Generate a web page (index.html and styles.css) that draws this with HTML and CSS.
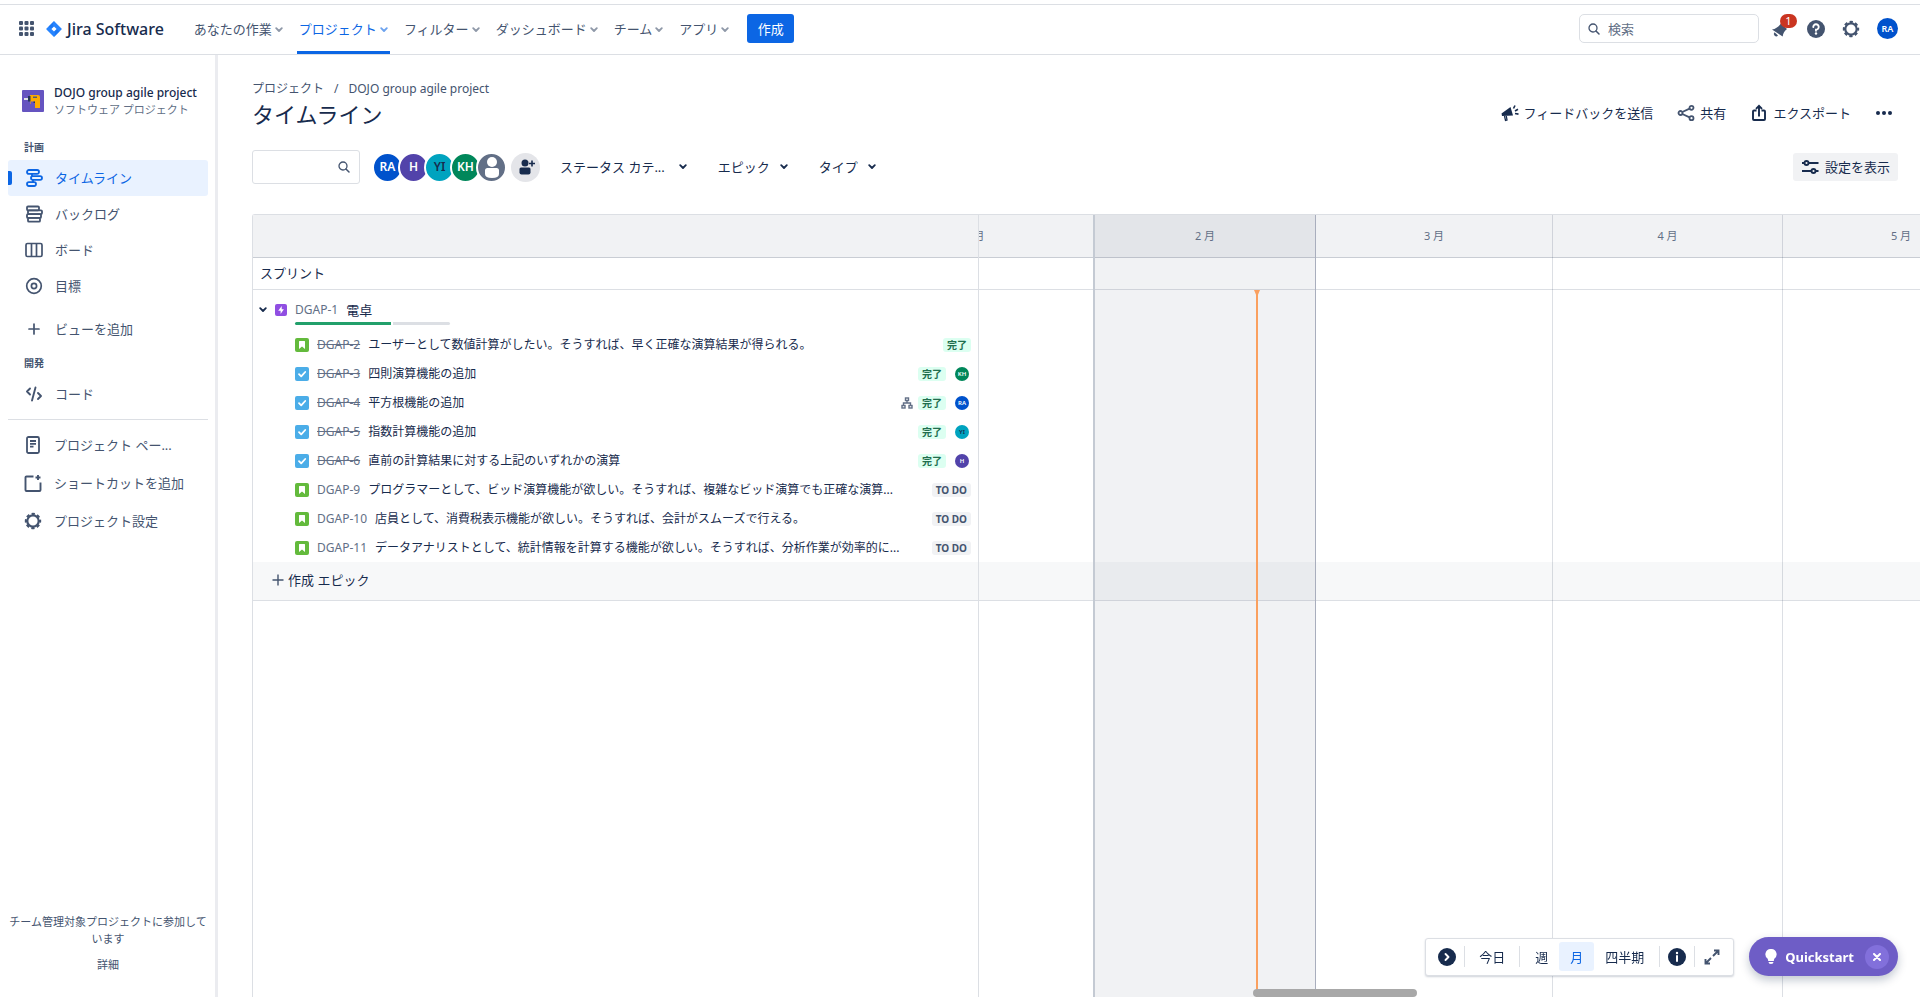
FILE: index.html
```html
<!DOCTYPE html>
<html lang="ja">
<head>
<meta charset="utf-8">
<meta name="viewport" content="width=device-width, initial-scale=1">
<title>タイムライン - Jira Software</title>
<link rel="stylesheet" href="styles.css">
</head>
<body>
<svg class="defs" aria-hidden="true">
  <symbol id="chev" viewBox="0 0 8 6"><path d="M1.2 1.2 4 4 6.800 1.200" fill="none" stroke="currentColor" stroke-width="1.800" stroke-linecap="round" stroke-linejoin="round"/></symbol>
  <symbol id="gear" viewBox="0 0 18 18"><circle cx="9" cy="9" r="5.700" fill="none" stroke="currentColor" stroke-width="2.200"/><circle cx="9" cy="9" r="7.100" fill="none" stroke="currentColor" stroke-width="2.200" stroke-dasharray="3.200 2.376" stroke-dashoffset="1.600"/></symbol>
  <symbol id="search" viewBox="0 0 12 12"><circle cx="5" cy="5" r="4" fill="none" stroke="currentColor" stroke-width="1.300"/><path d="m8 8 3 3" stroke="currentColor" stroke-width="1.500" stroke-linecap="round"/></symbol>
  <symbol id="story" viewBox="0 0 14 14"><rect width="14" height="14" rx="2" fill="#63ba3c"/><path d="M4 3.500q0-.5.5-.5h5q.5 0 .5.500V11L7 8.600 4 11z" fill="#fff"/><path d="M5.700 4.700h2.600v3.200L7 6.900 5.700 7.900z" fill="#fff"/></symbol>
  <symbol id="task" viewBox="0 0 14 14"><rect width="14" height="14" rx="2" fill="#4bade8"/><path d="m4 7.200 2.200 2.200L10.200 5" fill="none" stroke="#fff" stroke-width="1.800" stroke-linecap="round" stroke-linejoin="round"/></symbol>
</svg>

<header class="topbar">
  <button class="plain switcher" aria-label="アプリスイッチャー"><svg width="15" height="15" viewBox="0 0 15 15" fill="currentColor"><rect width="4" height="4" rx="1"/><rect x="5.500" width="4" height="4" rx="1"/><rect x="11" width="4" height="4" rx="1"/><rect y="5.500" width="4" height="4" rx="1"/><rect x="5.500" y="5.500" width="4" height="4" rx="1"/><rect x="11" y="5.500" width="4" height="4" rx="1"/><rect y="11" width="4" height="4" rx="1"/><rect x="5.500" y="11" width="4" height="4" rx="1"/><rect x="11" y="11" width="4" height="4" rx="1"/></svg></button>
  <a class="brand" href="#"><svg width="16" height="16" viewBox="0 0 16 16"><path d="M8 0 15.500 7.500a.7.700 0 0 1 0 1L8 16 .5 8.500a.7.700 0 0 1 0-1z" fill="#2684ff"/><path d="M8 0C6.500 2 6.500 4 8 5.500L5.500 8 2.500 5.500z" fill="#0c66e4" opacity=".4"/><path d="M8 16c1.500-2 1.500-4 0-5.500L10.500 8l3 2.500z" fill="#0c66e4" opacity=".4"/><path d="M8 5.400 10.600 8 8 10.600 5.400 8z" fill="#fff"/></svg><span>Jira Software</span></a>
  <nav class="mainnav">
    <button class="plain">あなたの作業<svg class="chev"><use href="#chev"/></svg></button>
    <button class="plain current">プロジェクト<svg class="chev"><use href="#chev"/></svg></button>
    <button class="plain">フィルター<svg class="chev"><use href="#chev"/></svg></button>
    <button class="plain">ダッシュボード<svg class="chev"><use href="#chev"/></svg></button>
    <button class="plain">チーム<svg class="chev"><use href="#chev"/></svg></button>
    <button class="plain">アプリ<svg class="chev"><use href="#chev"/></svg></button>
  </nav>
  <button class="create">作成</button>
  <div class="topright">
    <label class="search"><svg width="12" height="12"><use href="#search"/></svg><input type="search" placeholder="検索" aria-label="検索"></label>
    <button class="plain bell" aria-label="通知"><svg width="18" height="18" viewBox="0 0 18 18" fill="currentColor"><path d="M0 9.500C4 8.800 6.500 6.500 9 3.500L15 9c-2.500 2-4 4.200-4.300 7.500z"/><path d="M2.500 12.300 6 15.500a2.200 2.200 0 0 1-3.500-3.200z"/></svg><span class="count">1</span></button>
    <button class="plain" aria-label="ヘルプ"><svg width="18" height="18" viewBox="0 0 18 18"><circle cx="9" cy="9" r="9" fill="currentColor"/><path d="M6.300 7A2.700 2.700 0 1 1 9 9.600v1.200" fill="none" stroke="#fff" stroke-width="1.900" stroke-linecap="round"/><circle cx="9" cy="13.500" r="1.200" fill="#fff"/></svg></button>
    <button class="plain" aria-label="設定"><svg width="18" height="18"><use href="#gear"/></svg></button>
    <button class="plain avatar me c-ra" aria-label="プロフィール">RA</button>
  </div>
</header>

<div class="shell">
  <aside class="sidebar">
    <div class="project">
      <svg width="22" height="22" viewBox="0 0 22 22"><rect width="22" height="22" rx="1" fill="#6554c0"/><path d="M8 5h8q2 0 2 2v11h-5v-4H8z" fill="#ffab00"/><path d="M6 6h2.500v5.500H6z" fill="#253858"/><path d="M2 8h4v2H2z" fill="#dfe1e6"/><path d="M11 6.500h4v1.500h-4z" fill="#505f79"/><path d="M8.500 11.500H13V14H8.500z" fill="#6554c0"/><path d="M11.500 11.500H13V13h-1.500z" fill="#253858"/></svg>
      <div><strong>DOJO group agile project</strong><small>ソフトウェア プロジェクト</small></div>
    </div>
    <h2>計画</h2>
    <ul class="plan">
      <li><a class="active" href="#"><svg class="nicon" viewBox="0 0 18 18" fill="none" stroke="currentColor" stroke-width="1.800"><rect x="2" y="1" width="12" height="3.800" rx="1.900"/><rect x="6" y="7.100" width="11" height="3.800" rx="1.900"/><rect x="2" y="13.200" width="9" height="3.800" rx="1.900"/><path d="M7 4.800v2.300M8 10.900v2.300"/></svg>タイムライン</a></li>
      <li><a href="#"><svg class="nicon" viewBox="0 0 18 18" fill="none" stroke="currentColor" stroke-width="1.800"><rect x="2" y="1.500" width="12" height="3.800" rx="1"/><rect x="3" y="5.300" width="14" height="3.800" rx="1"/><rect x="2" y="9.100" width="14" height="3.800" rx="1"/><rect x="3" y="12.900" width="12" height="3.800" rx="1"/></svg>バックログ</a></li>
      <li><a href="#"><svg class="nicon" viewBox="0 0 18 18" fill="none" stroke="currentColor" stroke-width="1.700"><rect x="1" y="2.500" width="16" height="13" rx="1.500"/><path d="M6.500 3v12M11.500 3v12"/></svg>ボード</a></li>
      <li><a href="#"><svg class="nicon" viewBox="0 0 18 18" fill="none" stroke="currentColor" stroke-width="1.700"><circle cx="9" cy="9" r="7.300"/><circle cx="9" cy="9" r="2.600"/></svg>目標</a></li>
    </ul>
    <a class="addview" href="#"><svg class="nicon" viewBox="0 0 18 18" stroke="currentColor" stroke-width="1.700" stroke-linecap="round"><path d="M9 4v10M4 9h10"/></svg>ビューを追加</a>
    <h2>開発</h2>
    <a class="code" href="#"><svg class="nicon" viewBox="0 0 18 18" fill="none" stroke="currentColor" stroke-width="1.900" stroke-linecap="round" stroke-linejoin="round"><path d="M5 3.500 2 6.500l3 3M10.500 2.500 7 15.500M13 8l3 3-3 3"/></svg>コード</a>
    <ul class="extra">
      <li><a href="#"><svg class="nicon" viewBox="0 0 18 18" fill="none" stroke="currentColor" stroke-width="1.800"><rect x="3" y="1" width="12" height="16" rx="1.500"/><path d="M6 5h6M6 7.800h6M6 10.600h3.500"/></svg>プロジェクト ペー...</a></li>
      <li><a href="#"><svg class="nicon" viewBox="0 0 18 18" fill="none" stroke="currentColor" stroke-width="1.900"><path d="M9.500 2.500H2.500a1 1 0 0 0-1 1v12.500a1 1 0 0 0 1 1h13a1 1 0 0 0 1-1V8.500M14 1v5M11.500 3.500h5"/></svg>ショートカットを追加</a></li>
      <li><a href="#"><svg class="nicon"><use href="#gear"/></svg>プロジェクト設定</a></li>
    </ul>
    <div class="sidefoot"><p>チーム管理対象プロジェクトに参加しています</p><a href="#">詳細</a></div>
  </aside>

  <main class="main">
    <div class="pagehead">
      <div>
        <nav class="crumbs"><a href="#">プロジェクト</a><span>/</span><a href="#">DOJO group agile project</a></nav>
        <h1>タイムライン</h1>
      </div>
      <div class="actions">
        <button class="plain"><svg width="18" height="18" viewBox="0 0 18 18" fill="currentColor"><path d="M.5 9.500 9.500 3l2.500 8.500-11 .5z"/><path d="m3.500 12 1 4.500 1.500-.5-.7-4" fill="none" stroke="currentColor" stroke-width="1.300"/><path d="m12.500 4.500 1.500-3M14 7l3-1.800M14 9.500l3.500.6" stroke="currentColor" stroke-width="1.600"/></svg>フィードバックを送信</button>
        <button class="plain"><svg width="18" height="18" viewBox="0 0 18 18" fill="none" stroke="#44546f" stroke-width="1.800"><circle cx="3.500" cy="9" r="2"/><circle cx="14.500" cy="3.800" r="2"/><circle cx="14.500" cy="14.200" r="2"/><path d="m5.300 8 7.300-3.400M5.300 10l7.300 3.400"/></svg>共有</button>
        <button class="plain"><svg width="18" height="18" viewBox="0 0 18 18" fill="none" stroke="currentColor" stroke-width="1.900"><path d="M6.500 6.500H4a1 1 0 0 0-1 1V15a1 1 0 0 0 1 1h10a1 1 0 0 0 1-1V7.500a1 1 0 0 0-1-1h-2.500M9 12.500V2M6 4.800 9 1.800l3 3"/></svg>エクスポート</button>
        <button class="plain" aria-label="その他"><svg width="18" height="18" viewBox="0 0 18 18" fill="currentColor"><circle cx="3" cy="9" r="2"/><circle cx="9" cy="9" r="2"/><circle cx="15" cy="9" r="2"/></svg></button>
      </div>
    </div>

    <div class="filters">
      <label class="find"><input type="text" aria-label="タイムラインを検索"><svg width="12" height="12"><use href="#search"/></svg></label>
      <div class="people">
        <span class="avatar c-ra">RA</span><span class="avatar c-h">H</span><span class="avatar c-yi">YI</span><span class="avatar c-kh">KH</span><span class="avatar c-none"><svg width="28" height="28" viewBox="0 0 28 28" fill="#fff"><circle cx="14" cy="9" r="5"/><path d="M7 17.500q0-2.500 2.500-2.500h9q2.500 0 2.500 2.500V21q0 4-7 4t-7-4z"/></svg></span>
      </div>
      <button class="plain addperson" aria-label="ユーザーを追加"><svg width="18" height="18" viewBox="0 0 18 18" fill="currentColor"><circle cx="8" cy="5" r="3.500"/><path d="M2.500 11q0-1.500 1.500-1.500h8q1.500 0 1.500 1.500v3.500q0 2-2 2h-7q-2 0-2-2z"/><path d="M15 2.500v6M12 5.500h6" stroke="currentColor" stroke-width="1.600"/></svg></button>
      <div class="drops">
        <button class="plain wide">ステータス カテ...<svg class="chev"><use href="#chev"/></svg></button>
        <button class="plain">エピック<svg class="chev"><use href="#chev"/></svg></button>
        <button class="plain">タイプ<svg class="chev"><use href="#chev"/></svg></button>
      </div>
      <button class="settings"><svg width="18" height="18" viewBox="0 0 18 18" fill="none" stroke="currentColor" stroke-width="1.900"><path d="M1 5h2.500M8 5h9.500M1 13h9M15 13h2.500"/><circle cx="5.500" cy="5" r="2"/><circle cx="12.500" cy="13" r="2"/></svg>設定を表示</button>
    </div>

    <section class="board">
      <div class="list">
        <div class="cell head"></div>
        <div class="cell sprint">スプリント</div>
        <div class="epic">
          <button class="plain" aria-label="折りたたむ"><svg class="chev"><use href="#chev"/></svg></button>
          <svg width="12" height="12" viewBox="0 0 12 12"><rect width="12" height="12" rx="2" fill="#904ee2"/><path d="M6.700 2 3.200 6.700h2.400V10l3.300-4.700H6.700z" fill="#fff"/></svg>
          <div class="epictext"><div><a class="key" href="#">DGAP-1</a><span>電卓</span></div><div class="progress"><i class="done" style="width:62%"></i><i class="rest"></i></div></div>
        </div>
        <ul class="issues">
          <li><svg class="type"><use href="#story"/></svg><a class="key struck" href="#">DGAP-2</a><span class="title">ユーザーとして数値計算がしたい。そうすれば、早く正確な演算結果が得られる。</span><span class="tag ok">完了</span></li>
          <li><svg class="type"><use href="#task"/></svg><a class="key struck" href="#">DGAP-3</a><span class="title">四則演算機能の追加</span><span class="tag ok">完了</span><span class="avatar mini c-kh">KH</span></li>
          <li><svg class="type"><use href="#task"/></svg><a class="key struck" href="#">DGAP-4</a><span class="title">平方根機能の追加</span><svg class="tree" width="12" height="12" viewBox="0 0 12 12" fill="none" stroke="currentColor" stroke-width="1.400"><rect x="4.500" y="1" width="3" height="2.500"/><rect x="1" y="8.500" width="3" height="2.500"/><rect x="8" y="8.500" width="3" height="2.500"/><path d="M6 3.500V6M2.500 8.500V6h7v2.500"/></svg><span class="tag ok">完了</span><span class="avatar mini c-ra">RA</span></li>
          <li><svg class="type"><use href="#task"/></svg><a class="key struck" href="#">DGAP-5</a><span class="title">指数計算機能の追加</span><span class="tag ok">完了</span><span class="avatar mini c-yi">YI</span></li>
          <li><svg class="type"><use href="#task"/></svg><a class="key struck" href="#">DGAP-6</a><span class="title">直前の計算結果に対する上記のいずれかの演算</span><span class="tag ok">完了</span><span class="avatar mini c-h">H</span></li>
          <li><svg class="type"><use href="#story"/></svg><a class="key" href="#">DGAP-9</a><span class="title">プログラマーとして、ビッド演算機能が欲しい。そうすれば、複雑なビッド演算でも正確な演算...</span><span class="tag">TO DO</span></li>
          <li><svg class="type"><use href="#story"/></svg><a class="key" href="#">DGAP-10</a><span class="title">店員として、消費税表示機能が欲しい。そうすれば、会計がスムーズで行える。</span><span class="tag">TO DO</span></li>
          <li><svg class="type"><use href="#story"/></svg><a class="key" href="#">DGAP-11</a><span class="title">データアナリストとして、統計情報を計算する機能が欲しい。そうすれば、分析作業が効率的に...</span><span class="tag">TO DO</span></li>
        </ul>
        <button class="plain newepic"><svg width="12" height="12" viewBox="0 0 12 12" stroke="#44546f" stroke-width="1.400"><path d="M6 .5v11M.5 6h11"/></svg>作成 エピック</button>
      </div>
      <div class="chart">
        <div class="bands"><div class="cell head"></div><div class="cell sprint"></div><div class="gap"></div><div class="newband"></div></div>
        <div class="months">
          <div style="width:237px">1 月</div>
          <div class="now" style="width:223px">2 月<i class="today" style="left:73%"></i></div>
          <div style="width:237px">3 月</div>
          <div style="width:230px">4 月</div>
          <div style="width:237px">5 月</div>
        </div>
        <div class="scroll"></div>
      </div>
    </section>
  </main>
</div>

<div class="dock">
  <div class="zoombar">
    <button class="plain ic" aria-label="凡例"><svg width="18" height="18" viewBox="0 0 18 18"><circle cx="9" cy="9" r="9" fill="#172b4d"/><path d="m7.500 6 3 3-3 3" fill="none" stroke="#fff" stroke-width="1.900" stroke-linecap="round" stroke-linejoin="round"/></svg></button>
    <hr>
    <button class="plain day">今日</button>
    <hr>
    <div class="scales"><button class="plain">週</button><button class="plain on">月</button><button class="plain">四半期</button></div>
    <hr>
    <button class="plain ic" aria-label="情報"><svg width="18" height="18" viewBox="0 0 18 18"><circle cx="9" cy="9" r="9" fill="#172b4d"/><path d="M9 8v5" stroke="#fff" stroke-width="2" stroke-linecap="round"/><circle cx="9" cy="5" r="1.200" fill="#fff"/></svg></button>
    <hr>
    <button class="plain ic" aria-label="全画面"><svg width="18" height="18" viewBox="0 0 18 18" fill="none" stroke="#44546f" stroke-width="1.900"><path d="M11 2.500h4.500V7M15 3l-5 5M7 15.500H2.500V11M3 15l5-5"/></svg></button>
  </div>
  <div class="quick">
    <svg width="12" height="16" viewBox="0 0 12 16" fill="#fff"><path d="M6 0a5.300 5.300 0 0 1 3.500 9.500Q8.800 10.500 8.800 12H3.200q0-1.500-.7-2.500A5.300 5.300 0 0 1 6 0zM3.500 13h5q0 2-2.500 2t-2.500-2z"/></svg>
    <button class="plain">Quickstart</button>
    <button class="plain close" aria-label="閉じる"><svg width="8" height="8" viewBox="0 0 8 8" stroke="#fff" stroke-width="2" stroke-linecap="round"><path d="m1 1 6 6M7 1 1 7"/></svg></button>
  </div>
</div>
</body>
</html>
```
FILE: styles.css
```css
* { box-sizing: border-box; }
body { margin: 0; height: 100vh; display: flex; flex-direction: column; overflow: hidden; background: #fff; color: #172b4d; font: 13px/18px "Noto Sans", "Noto Sans CJK JP", sans-serif; }
a { color: inherit; text-decoration: none; }
ul, p, h1, h2 { margin: 0; padding: 0; list-style: none; }
svg { flex: none; display: block; }
.defs { position: absolute; width: 0; height: 0; }
button { font: inherit; color: inherit; cursor: pointer; }
.plain { border: 0; background: none; padding: 0; display: flex; align-items: center; white-space: nowrap; }
.chev { width: 8px; height: 6px; }
.avatar { display: flex; align-items: center; justify-content: center; border-radius: 50%; color: #fff; font-weight: 600; }
.c-ra { background: #0052cc; }
.c-h { background: #5243aa; }
.c-yi { background: #00a3bf; color: #172b4d; }
.c-kh { background: #00875a; }
.c-none { background: #626f86; }

.topbar { flex: none; display: flex; align-items: center; height: 51px; margin-top: 4px; padding: 0 22px 2px 19px; border-top: 1px solid #dcdfe4; border-bottom: 1px solid #dcdfe4; color: #44546f; }
.brand { display: flex; align-items: center; gap: 5px; margin: 0 28px 0 12px; color: #172b4d; font-size: 16px; font-weight: 500; white-space: nowrap; }
.mainnav { display: flex; align-self: stretch; gap: 12px; margin-bottom: -2px; }
.mainnav button { gap: 3px; padding: 0 2px 2px; border-top: 3px solid transparent; border-bottom: 3px solid transparent; }
.mainnav .chev { opacity: .6; margin-top: 2px; }
.mainnav .current { color: #0c66e4; border-bottom-color: #0c66e4; }
.create { margin-left: 16px; width: 47px; height: 29px; padding: 0; border: 0; border-radius: 3px; background: #0c66e4; color: #fff; }
.topright { margin-left: auto; display: flex; align-items: center; gap: 17px; }
.search { display: flex; align-items: center; gap: 8px; width: 180px; height: 29px; margin-right: -4px; padding: 0 8px; border: 1px solid #dcdfe4; border-radius: 5px; }
.search input { min-width: 0; flex: 1; border: 0; padding: 0; outline: 0; font: inherit; color: inherit; }
.search input::placeholder { color: #626f86; opacity: 1; }
.bell { position: relative; }
.count { position: absolute; left: 8px; top: -6px; width: 17px; height: 14px; border-radius: 7px; background: #ca3521; color: #fff; font-size: 11px; line-height: 14px; text-align: center; }
.me { justify-content: center; width: 21px; height: 21px; font-size: 9px; border-radius: 50%; }
.plain.me { background: #0052cc; color: #fff; }

.shell { flex: 1; min-height: 0; display: flex; }
.sidebar { flex: none; width: 218px; display: flex; flex-direction: column; padding: 29px 7px 24px 8px; border-right: 3px solid #ebecf0; color: #44546f; white-space: nowrap; }
.project { display: flex; align-items: center; gap: 10px; padding-left: 14px; }
.project strong { display: block; color: #172b4d; font-size: 12px; font-weight: 500; line-height: 18px; }
.project small { display: block; font-size: 11px; line-height: 16px; color: #626f86; }
.sidebar h2 { padding-left: 16px; font-size: 10px; line-height: 16px; font-weight: 700; }
.project + h2 { margin: 21px 0 5px; }
.sidebar ul a, .addview, .code { display: flex; align-items: center; gap: 12px; height: 36px; padding-left: 17px; border-radius: 3px; position: relative; }
.nicon { width: 18px; height: 18px; }
.sidebar .active { background: #e9f2ff; color: #0c66e4; }
.active::before { content: ""; position: absolute; left: 0; top: 11px; width: 4px; height: 14px; border-radius: 0 2px 2px 0; background: #0c66e4; }
.addview { margin: 7px 0 8px; }
.code { margin: 5px 0 7px; }
.sidebar .extra { padding-top: 6px; border-top: 1px solid #dcdfe4; }
.sidebar .extra a { height: 38px; padding-left: 16px; }
.sidefoot { margin-top: auto; font-size: 11px; line-height: 17px; text-align: center; white-space: normal; }
.sidefoot a { display: block; margin-top: 9px; }

.main { flex: 1; min-width: 0; display: flex; flex-direction: column; padding: 25px 0 0 34px; }
.pagehead { display: flex; justify-content: space-between; align-items: flex-end; padding-right: 27px; }
.crumbs { display: flex; gap: 10px; font-size: 12px; color: #44546f; }
h1 { font-size: 22px; line-height: 32px; font-weight: 400; }
.actions { display: flex; gap: 24px; padding-bottom: 8px; }
.actions button { gap: 5px; }
.filters { display: flex; align-items: center; margin: 20px 22px 30px 0; }
.find { display: flex; align-items: center; width: 108px; height: 34px; padding-right: 9px; border: 1px solid #dcdfe4; border-radius: 3px; color: #44546f; }
.find input { flex: 1; min-width: 0; border: 0; outline: 0; background: none; font: inherit; }
.people { display: flex; margin-left: 12px; }
.people .avatar { width: 31px; height: 31px; margin-right: -5px; border: 2px solid #fff; font-size: 12px; overflow: hidden; }
.addperson { justify-content: center; width: 29px; height: 29px; margin-left: 9px; border-radius: 50%; }
.plain.addperson { background: #e4e5e9; }
.drops { display: flex; gap: 31px; margin-left: 20px; }
.drops button { gap: 10px; }
.drops .wide { gap: 14px; }
.settings { display: flex; align-items: center; gap: 6px; height: 28px; margin-left: auto; padding: 0 8px; border: 0; border-radius: 3px; background: #f1f2f4; }

.board { flex: 1; min-height: 0; display: flex; border: 1px solid #dcdfe4; border-right: 0; border-bottom: 0; border-radius: 3px 0 0 0; }
.list { flex: none; width: 44%; max-width: 726px; min-width: 600px; border-right: 1px solid #dcdfe4; font-size: 12px; }
.cell { border-bottom: 1px solid #dcdfe4; }
.head { height: 43px; background: #f1f2f4; border-bottom-color: #c9cdd4; }
.sprint { height: 32px; padding: 6px 7px; font-size: 13px; }
.epic { display: flex; align-items: flex-start; height: 40px; padding: 11px 0 0 6px; }
.epic > button, .epic > svg { margin-top: 3px; }
.epic > button { height: 12px; margin-right: 8px; }
.epictext { margin-left: 8px; }
.epictext > div:first-child { display: flex; gap: 8px; font-size: 13px; }
.epictext > div .key { font-size: 12px; }
.key { color: #626f86; }
.struck { text-decoration: line-through; }
.progress { display: flex; gap: 2px; width: 155px; height: 3px; margin-top: 3px; }
.progress .done { background: #22a06b; border-radius: 2px 0 0 2px; }
.progress .rest { flex: 1; background: #dcdfe4; border-radius: 0 2px 2px 0; }
.issues li { display: flex; align-items: center; height: 29px; padding: 0 7px 0 42px; white-space: nowrap; }
.type { width: 14px; height: 14px; margin-right: 8px; }
.title { flex: 1; min-width: 0; margin-left: 8px; overflow: hidden; text-overflow: ellipsis; }
.tag { padding: 0 4px; border-radius: 3px; background: #f1f2f4; color: #44546f; font-size: 10px; line-height: 14px; font-weight: 700; }
.ok { background: #dcfff1; color: #216e4e; }
.tree { margin-right: 5px; color: #626f86; }
.mini { width: 14px; height: 14px; margin: 0 2px 0 9px; font-size: 6px; line-height: 14px; }
.newepic { width: 100%; height: 39px; gap: 4px; font-size: 13px; }
.plain.newepic { padding: 0 0 2px 19px; background: #f7f8f9; border-bottom: 1px solid #dcdfe4; }

.chart { flex: 1; min-width: 0; position: relative; overflow: hidden; }
.gap { height: 272px; }
.newband { height: 39px; background: #f7f8f9; border-bottom: 1px solid #dcdfe4; }
.months { position: absolute; top: 0; bottom: 0; left: -123px; display: flex; }
.months > div { position: relative; padding-top: 12px; border-right: 1px solid rgba(9, 30, 66, .14); color: #626f86; font-size: 11px; text-align: center; }
.months > div:first-child { border-right: 0; }
.months > .now { background: rgba(9, 30, 66, .06); border-left: 2px solid #c4cad3; border-right-color: #a9aebd; }
.today { position: absolute; top: 75px; bottom: 0; width: 2px; background: #faa05f; }
.today::before { content: ""; position: absolute; left: -2px; top: 0; border: 3px solid transparent; border-top: 7px solid #faa05f; border-bottom: 0; }
.scroll { position: absolute; left: 274px; bottom: 0; width: 164px; height: 8px; border-radius: 4px; background: #a8a8a8; }

.dock { position: fixed; right: 22px; bottom: 21px; display: flex; align-items: center; gap: 15px; }
.zoombar { display: flex; align-items: center; height: 38px; padding: 0 4px; border: 1px solid #dcdfe4; border-radius: 3px; background: #fff; box-shadow: 0 1px 2px rgba(9, 30, 66, .2); }
.zoombar hr { width: 1px; height: 21px; margin: 0; border: 0; background: #dcdfe4; }
.zoombar .plain { height: 29px; justify-content: center; border-radius: 3px; }
.zoombar .ic { width: 34px; padding: 0 4px; }
.zoombar .day { width: 54px; }
.scales { display: flex; padding: 0 4px; }
.scales button { padding: 0 11px; }
.zoombar .on { background: #e9f2ff; color: #0c66e4; }
.quick { display: flex; align-items: center; height: 39px; padding: 0 9px 0 16px; border-radius: 20px; background: #6e5dc6; color: #fff; font-weight: 700; box-shadow: 0 4px 10px rgba(9, 30, 66, .25); }
.quick > button { margin-left: 8px; }
.quick .close { justify-content: center; width: 24px; height: 24px; margin-left: 11px; border-radius: 50%; background: #8270db; }
```
